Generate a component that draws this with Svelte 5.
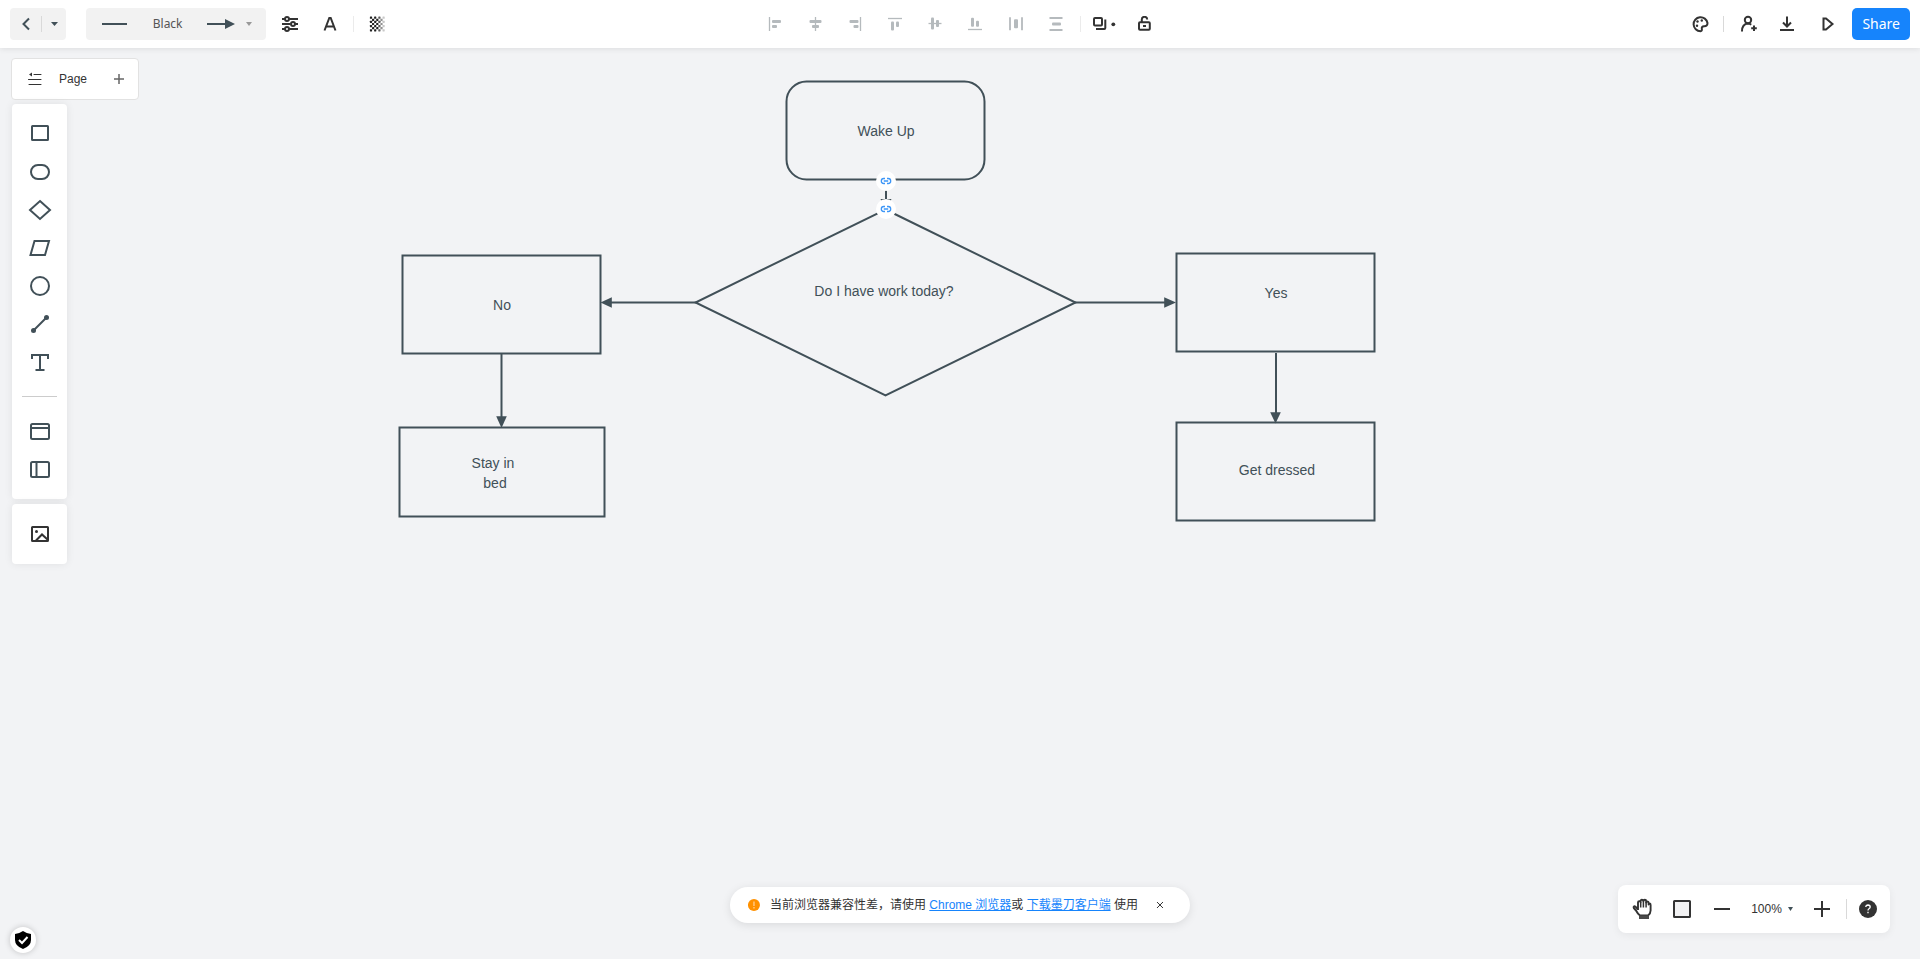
<script>
  const aligns = [
    { label: 'Align left', d: 'M2.500 1V15', bars: [[5, 4, 9, 3], [5, 9, 5, 3]] },
    { label: 'Align center', d: 'M8.500 1V15', bars: [[2.5, 4, 12, 3], [5, 9, 7, 3]] },
    { label: 'Align right', d: 'M13.500 1V15', bars: [[2.5, 4, 9, 3], [6.5, 9, 5, 3]] },
    { label: 'Align top', d: 'M1 2.500H15', bars: [[4, 5.5, 3, 9], [9, 5.5, 3, 5.5]] },
    { label: 'Align middle', d: 'M1.500 7.500H14.500', bars: [[4, 1.5, 3, 12], [9, 4, 3, 7]] },
    { label: 'Align bottom', d: 'M1 13.500H15', bars: [[4, 1.7, 3, 9], [9, 4.7, 3, 6]] },
    { label: 'Distribute horizontally', d: 'M3 1.300V14.300M15 1.300V14.300', bars: [[7, 3.3, 4, 9]], thick: true },
    { label: 'Distribute vertically', d: 'M2.500 2H15.500M2.500 14H15.500', bars: [[5, 6.5, 9, 3]], thick: true }
  ];

  const checks = [];
  for (let row = 0; row < 7; row++)
    for (let col = 0; col < 7; col++)
      if ((row + col) % 2 === 0) checks.push({ x: 0.9 + col * 2.1, y: 0.6 + row * 2.1, o: 1 - Math.max(0, col - 3) * 0.25 });

  const shapes = [
    { label: 'Rectangle', d: 'M5 4.500Q5 4 5.500 4H20.500Q21 4 21 4.500V17.500Q21 18 20.500 18H5.500Q5 18 5 17.500Z' },
    { label: 'Rounded rectangle', d: 'M11 5H15A7 7 0 0 1 15 19H11A7 7 0 0 1 11 5Z' },
    { label: 'Diamond', d: 'M13 3L23 12L13 21L3 12Z' },
    { label: 'Parallelogram', d: 'M7.500 5H22L18 19H3.500Z' },
    { label: 'Ellipse', d: 'M4 12A9 9 0 0 1 22 12A9 9 0 0 1 4 12Z' },
    { label: 'Line', d: 'M7 18L19 6', dots: true },
    { label: 'Text', d: 'M5 9V5H21V9M13 5V20M8.500 20H17.500' }
  ];
  const frames = [
    { label: 'Horizontal container', d: 'M4 9H22' },
    { label: 'Vertical container', d: 'M9.500 5V20' }
  ];

  const nodes = [
    { x: 786.5, y: 81.5, w: 198, h: 98, r: 20, lines: [['Wake Up', 886, 136]] },
    { x: 402.5, y: 255.5, w: 198, h: 98, r: 0, lines: [['No', 502, 310]] },
    { x: 399.5, y: 427.5, w: 205, h: 89, r: 0, lines: [['Stay in', 493, 468], ['bed', 495, 488]] },
    { x: 1176.5, y: 253.5, w: 198, h: 98, r: 0, lines: [['Yes', 1276, 298]] },
    { x: 1176.5, y: 422.5, w: 198, h: 98, r: 0, lines: [['Get dressed', 1277, 475]] }
  ];
  const edges = [
    { line: 'M886 180V200', head: 'M880.500 199H891.500L886 210Z' },
    { line: 'M696 302.500H611', head: 'M611.800 297.200V307.800L600.500 302.500Z' },
    { line: 'M1075 302.500H1165', head: 'M1164.200 297.200V307.800L1176 302.500Z' },
    { line: 'M501.500 354V417', head: 'M496.200 416.200H506.800L501.500 428Z' },
    { line: 'M1276 353V413', head: 'M1270.200 412.200H1280.800L1275.500 423.500Z' }
  ];
  const links = [[886, 181], [886, 209]];
</script>

<div class="app">
  <header>
    <div class="left">
      <div class="group back">
        <button aria-label="Back" class="b31"><svg width="16" height="16" viewBox="0 0 16 16"><path d="M11 2.500L5.500 8L11 13.500" class="slate" /></svg></button>
        <span class="rule"></span>
        <button aria-label="More" class="b24"><svg width="7" height="4" viewBox="0 0 7 4"><path d="M0 0H7L3.500 4Z" fill="#415058" /></svg></button>
      </div>
      <button class="group style">
        <svg width="26" height="16" viewBox="0 0 26 16"><path d="M0 8H25" class="slate" /></svg>
        <span>Black</span>
        <svg width="28" height="16" viewBox="0 0 28 16"><path d="M0 8H19" class="slate" /><path d="M18 3V13L28 8Z" fill="#415058" /></svg>
        <svg width="6" height="4" viewBox="0 0 6 4"><path d="M0 0H6L3 4Z" fill="#999" /></svg>
      </button>
      <div class="tools">
        <button aria-label="Adjust" class="b40"><svg width="16" height="16" viewBox="0 0 16 16" class="ink"><path d="M0 3H3M7 3H16M0 8H8.500M13 8H16M0 13H3M7 13H16" /><circle cx="5" cy="3" r="2" /><circle cx="11" cy="8" r="2" /><circle cx="5" cy="13" r="2" /></svg></button>
        <button aria-label="Text style" class="b40"><svg width="16" height="16" viewBox="0 0 16 16" class="ink"><path d="M2.500 14.500L7.300 2H8.700L13.500 14.500M4.500 10.500H11.500" /></svg></button>
        <span class="rule light"></span>
        <button aria-label="Opacity" class="b40"><svg width="16" height="16" viewBox="0 0 16 16">{#each checks as c}<rect x={c.x} y={c.y} width="2.200" height="2.200" rx="0.400" fill="#222" opacity={c.o} />{/each}</svg></button>
      </div>
    </div>

    <div class="middle">
      {#each aligns as a}
        <button aria-label={a.label} class="b40" disabled>
          <svg width="16" height="16" viewBox="0 0 16 16"><path d={a.d} stroke="#b5babd" stroke-width={a.thick ? 1.8 : 1.3} />{#each a.bars as [x, y, w, h]}<rect {x} {y} width={w} height={h} rx="1" fill="#b5babd" />{/each}</svg>
        </button>
      {/each}
      <span class="rule light wide"></span>
      <button aria-label="Layer order" class="b40"><svg width="26" height="16" viewBox="0 0 26 16" class="ink"><rect x="2" y="2" width="8" height="7.500" rx="1" /><path d="M13.300 3.500V12Q13.300 13 12.300 13H4" /><circle cx="21.300" cy="8.300" r="1.900" fill="#333" stroke="none" /></svg></button>
      <button aria-label="Lock" class="b40"><svg width="16" height="16" viewBox="0 0 16 16" class="ink"><rect x="2" y="6.200" width="10.800" height="7.600" rx="1" /><path d="M4.800 6V3.500A2.700 2.700 0 0 1 10.200 3.500M6 10H9" /></svg></button>
    </div>

    <div class="right">
      <button aria-label="Theme" class="b38"><svg width="18" height="18" viewBox="0 0 18 18" class="ink"><path d="M16.500 8A7 7 0 1 0 9.500 16.200Q11.300 16 10.800 13.800Q10.500 11.500 13 11.300Q16.500 11.500 16.500 8Z" /><g fill="#333" stroke="none"><circle cx="6.500" cy="6.500" r="1.200" /><circle cx="10.800" cy="5.500" r="1.200" /><circle cx="6" cy="10.800" r="1.200" /></g></svg></button>
      <span class="rule"></span>
      <button aria-label="Invite" class="b38 invite"><svg width="18" height="18" viewBox="0 0 18 18" class="ink"><circle cx="8" cy="5" r="3.200" /><path d="M2 16.500Q2 9 8 8.600Q10 8.700 11.200 9.800M14 10.500V16M11.200 13.200H16.800" /></svg></button>
      <button aria-label="Download" class="b38"><svg width="16" height="16" viewBox="0 0 16 16" class="ink"><path d="M8 0.500V10M4 6.500L8 10.500L12 6.500M1 14H15" /></svg></button>
      <button aria-label="Present" class="b40 present"><svg width="16" height="16" viewBox="0 0 16 16" class="ink"><path d="M3.500 2.500L6 2.500L12.500 8L6 13.500H3.500Z" /></svg></button>
      <button class="share">Share</button>
    </div>
  </header>

  <main>
    <svg class="canvas" viewBox="0 48 1920 911" width="1920" height="911">
      <g fill="none" stroke="#415058" stroke-width="2">
        {#each nodes as n}<rect x={n.x} y={n.y} width={n.w} height={n.h} rx={n.r} />{/each}
        <path d="M885.500 209.500L1075.500 302.500L885.500 395.300L695.500 302.500Z" />
        {#each edges as e}<path d={e.line} />{/each}
      </g>
      <g fill="#415058">
        {#each edges as e}<path d={e.head} />{/each}
        {#each nodes as n}{#each n.lines as [t, x, y]}<text {x} {y}>{t}</text>{/each}{/each}
        <text x="884" y="296">Do I have work today?</text>
      </g>
      {#each links as [x, y]}
        <circle cx={x} cy={y} r="10" fill="#fff" />
        <g transform="translate({x} {y})" fill="none" stroke="#3d96f7" stroke-width="1.300"><path d="M-1 -2.500H-2.200A2.500 2.500 0 0 0 -2.200 2.500H-1M1 -2.500H2.200A2.500 2.500 0 0 1 2.200 2.500H1M-2.200 0H2.200" /></g>
      {/each}
    </svg>

    <div class="side">
      <div class="pagebar">
        <button aria-label="Page list"><svg width="14" height="14" viewBox="0 0 14 14"><path d="M6 2.500H13M0.500 7.500H13M1 12.500H13" stroke="#333" stroke-linecap="round" fill="none" /><path d="M1 2.500L4 0.500V4.500Z" fill="#333" /></svg></button>
        <span>Page</span>
        <button aria-label="Add page"><svg width="10" height="10" viewBox="0 0 10 10"><path d="M5 0V10M0 5H10" stroke="#666" stroke-width="1.500" /></svg></button>
      </div>
      <nav class="panel" aria-label="Shapes">
        {#each shapes as s}
          <button aria-label={s.label}>
            <svg width="26" height="24" viewBox="0 0 26 24"><path d={s.d} class="slate" />{#if s.dots}<circle cx="6.500" cy="18.500" r="2.500" fill="#415058" /><circle cx="19.500" cy="5.500" r="2.500" fill="#415058" />{/if}</svg>
          </button>
        {/each}
        <hr />
        {#each frames as f}
          <button aria-label={f.label}><svg width="26" height="24" viewBox="0 0 26 24" class="frame"><rect x="4" y="5" width="18" height="15" rx="1.500" /><path d={f.d} /></svg></button>
        {/each}
      </nav>
      <div class="panel image">
        <button aria-label="Image"><svg width="26" height="24" viewBox="0 0 26 24" class="ink"><rect x="5" y="5" width="16" height="14" rx="0.500" /><path d="M9 18.500L15 12.500L20.500 17.500" /><circle cx="9.500" cy="9.500" r="1.500" fill="#333" stroke="none" /></svg></button>
      </div>
    </div>

    <button class="shield" aria-label="Security"><svg width="18" height="20" viewBox="0 0 18 20"><path d="M9 1Q12.500 3.500 17 4V10Q17 16 9 19Q1 16 1 10V4Q5.500 3.500 9 1Z" fill="#000" /><path d="M5 10L8 13L13.500 7" fill="none" stroke="#fff" stroke-width="2" /></svg></button>

    <div class="notice">
      <svg width="12" height="12" viewBox="0 0 12 12"><circle cx="6" cy="6" r="6" fill="#ff9100" /><path d="M6 2.500V7M6 8V9.500" stroke="#ffc680" stroke-width="1.500" /></svg>
      <p>当前浏览器兼容性差，请使用 <a href="#chrome">Chrome 浏览器</a>或 <a href="#client">下载墨刀客户端</a> 使用</p>
      <button aria-label="Close"><svg width="8" height="8" viewBox="0 0 8 8"><path d="M1 1L7 7M7 1L1 7" stroke="#333" stroke-width="1" /></svg></button>
    </div>

    <div class="zoombar">
      <button aria-label="Hand" class="b40"><svg width="20" height="22" viewBox="0 0 20 22"><path d="M6 12V4.500Q6 3.200 7.200 3.200Q8.300 3.200 8.600 4V3Q8.600 1.800 9.900 1.800Q11.300 1.800 11.400 3Q11.600 1.800 12.800 1.800Q14.200 1.800 14.200 3.200V4.500Q14.500 3.400 15.500 3.400Q16.600 3.500 16.600 5V6.500Q17 5.500 17.800 5.500Q18.600 5.600 18.600 7V12.500Q18.600 15.500 16 17.500H8Q5.500 15.500 4 12.500L1.800 10Q1.200 8.600 2.500 8.300Q3.500 8.200 6 11.500" fill="#fff" stroke="#333" stroke-width="1.900" stroke-linejoin="round" /><path d="M8.700 4V9.500M11.400 3V9.500M14.100 4V9.500" stroke="#333" stroke-width="1.500" /><path d="M7 17.500H17V21H7Z" fill="#4a4a4a" /></svg></button>
      <button aria-label="Fit to screen" class="b40"><svg width="18" height="18" viewBox="0 0 18 18"><rect x="1" y="1" width="16" height="16" rx="0.500" fill="#f2f2f3" stroke="#333" stroke-width="2" /></svg></button>
      <button aria-label="Zoom out" class="b40"><svg width="16" height="16" viewBox="0 0 16 16"><path d="M0 8H16" class="thick" /></svg></button>
      <button class="level">100%<svg width="5" height="4" viewBox="0 0 5 4"><path d="M0 0H5L2.500 4Z" fill="#415058" /></svg></button>
      <button aria-label="Zoom in" class="b40"><svg width="16" height="16" viewBox="0 0 16 16"><path d="M0 8H16M8 0V16" class="thick" /></svg></button>
      <span class="rule tall"></span>
      <button aria-label="Help" class="b40"><svg width="18" height="18" viewBox="0 0 18 18"><circle cx="9" cy="9" r="9" fill="#333" /><path d="M6.800 7Q7 5 9 5Q11.200 5.200 11.200 7Q11.200 8 10 8.700Q9 9.300 9 10.500M9 11.800V13.300" fill="none" stroke="#fff" stroke-width="1.300" /></svg></button>
    </div>
  </main>
</div>

<style>
  :global(body) { margin: 0; }
  .app {
    display: flex;
    flex-direction: column;
    height: 100vh;
    overflow: hidden;
    background: #f2f3f5;
    color: #333;
    font: 12px/18px "Liberation Sans", "Noto Sans CJK SC", sans-serif;
  }
  button {
    display: flex;
    align-items: center;
    justify-content: center;
    margin: 0;
    padding: 0;
    border: 0;
    background: none;
    color: inherit;
    font: inherit;
    cursor: pointer;
  }
  svg { display: block; flex: none; }
  .slate { fill: none; stroke: #415058; stroke-width: 2; }
  .ink { fill: none; stroke: #333; stroke-width: 2; }
  .frame { fill: none; stroke: #415058; stroke-width: 2; }
  .thick { stroke: #333; stroke-width: 2; }
  .b24 { width: 24px; height: 32px; }
  .b31 { width: 31px; height: 32px; }
  .b38 { width: 38px; height: 32px; }
  .b40 { width: 40px; height: 32px; }
  .rule { width: 1px; height: 16px; flex: none; background: #d9d9d9; }
  .light { background: #ebebeb; }
  .tools .rule { margin: 0 3px; }
  .wide { margin: 0 4px 0 5px; }

  header {
    position: relative;
    z-index: 1;
    display: grid;
    grid-template-columns: 1fr auto 1fr;
    align-items: center;
    flex: none;
    padding: 8px 10px;
    background: #fff;
    box-shadow: 0 1px 6px rgba(0, 0, 0, 0.09);
  }
  .left, .middle, .right, .tools { display: flex; align-items: center; }
  .group {
    display: flex;
    align-items: center;
    height: 32px;
    border-radius: 4px;
    background: #f2f2f2;
  }
  .style {
    box-sizing: border-box;
    width: 180px;
    margin: 0 4px 0 20px;
    padding: 0 14px 0 16px;
    justify-content: space-between;
    font-family: "Noto Sans", sans-serif;
    color: #555;
  }
  .style span { margin: 0 14px 0 14px; }
  .right { justify-content: flex-end; }
  .right .rule { margin-left: 4px; }
  .invite { margin-left: 6px; }
  .present { margin-left: 2px; }
  .share {
    height: 32px;
    margin-left: 4px;
    padding: 0 10px;
    border-radius: 5px;
    background: #1684fc;
    color: #fff;
    font: 14px/20px "Noto Sans", sans-serif;
  }

  main { position: relative; flex: 1; }
  .canvas { position: absolute; top: 0; left: 0; }
  .canvas text { font: 14px "Liberation Sans", sans-serif; text-anchor: middle; }

  .side {
    position: relative;
    display: flex;
    flex-direction: column;
    align-items: flex-start;
    gap: 4px;
    width: max-content;
    padding: 10px 0 0 12px;
  }
  .pagebar {
    display: flex;
    align-items: center;
    gap: 17px;
    height: 40px;
    margin-left: -1px;
    padding: 0 14px 0 16px;
    border: 1px solid #e2e2e2;
    border-radius: 4px;
    background: #fff;
  }
  .pagebar span { margin-right: 10px; }
  .panel {
    display: flex;
    flex-direction: column;
    box-sizing: border-box;
    width: 55px;
    padding: 11px 0;
    border-radius: 4px;
    background: #fff;
    box-shadow: 0 0 8px rgba(0, 0, 0, 0.08);
  }
  .panel button { width: 56px; height: 38px; }
  .panel hr {
    width: 35px;
    height: 1px;
    margin: 15px 10px;
    border: 0;
    background: #ccc;
  }
  .image { margin-top: 1px; }

  .shield {
    position: absolute;
    bottom: 6px;
    left: 10px;
    width: 26px;
    height: 26px;
    border-radius: 50%;
    background: #fff;
    box-shadow: 0 0 6px rgba(0, 0, 0, 0.2);
  }
  .notice {
    position: absolute;
    bottom: 36px;
    left: 50%;
    display: flex;
    align-items: center;
    height: 36px;
    padding: 0 26px 0 18px;
    border-radius: 18px;
    background: #fff;
    box-shadow: 0 2px 10px rgba(0, 0, 0, 0.1);
    transform: translateX(-50%);
    white-space: nowrap;
  }
  .notice p { margin: 0 18px 0 10px; }
  .notice a { color: #1684fc; }
  .zoombar {
    position: absolute;
    right: 30px;
    bottom: 26px;
    display: flex;
    align-items: center;
    height: 48px;
    padding: 0 2px 0 4px;
    border-radius: 8px;
    background: #fff;
    box-shadow: 0 2px 8px rgba(0, 0, 0, 0.06);
  }
  .level { gap: 6px; width: 60px; height: 32px; }
  .tall { height: 20px; margin: 0 1px 0 4px; }
</style>
